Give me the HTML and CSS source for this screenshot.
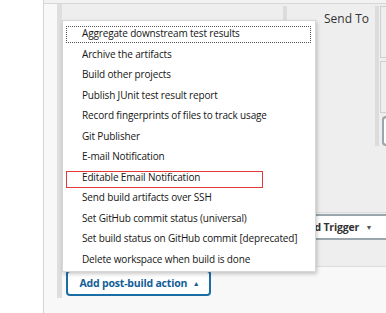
FILE: index.html
```html
<!DOCTYPE html>
<html lang="en">
<head>
  <meta charset="UTF-8">
  <title>Post-build Actions</title>
  <link rel="stylesheet" href="styles.css">
</head>
<body>
  <div class="page">
    <div class="topbar"></div>

    <div class="section">
      <div class="cols">
        <div class="left-col"></div>
        <div class="send-col">
          <div class="send-label">Send To</div>
        </div>
        <div class="extra-col">
          <div class="box"></div>
          <div class="box"></div>
          <div class="mini-button"></div>
        </div>
      </div>

      <div class="trigger-row">
        <button class="trigger-button">Add Trigger <span class="caret">&#9660;</span></button>
      </div>

      <div class="action-row">
        <button class="action-button">Add post-build action <span class="caret">&#9650;</span></button>
      </div>

      <!-- dropdown opened from the post-build button -->
      <ul class="menu">
        <li class="focused">Aggregate downstream test results</li>
        <li>Archive the artifacts</li>
        <li>Build other projects</li>
        <li>Publish JUnit test result report</li>
        <li>Record fingerprints of files to track usage</li>
        <li>Git Publisher</li>
        <li>E-mail Notification</li>
        <li class="marked">Editable Email Notification</li>
        <li>Send build artifacts over SSH</li>
        <li>Set GitHub commit status (universal)</li>
        <li>Set build status on GitHub commit [deprecated]</li>
        <li>Delete workspace when build is done</li>
      </ul>
    </div>
  </div>
</body>
</html>
```

FILE: styles.css
```css
body {
  margin: 0;
  background: #fff;
  font-family: 'Open Sans', 'Noto Sans', sans-serif;
  color: #151515;
  overflow: hidden;
}

.page {
  margin-left: 43px;
  border-left: 1px solid #d4d4d4;
  background: #f8f8f8;
  height: 313px;
  overflow: hidden;
}

.topbar {
  height: 3px;
  background: #f2f2f2;
  border-bottom: 1px solid #d6d6d6;
}

.section {
  position: relative;
  margin-left: 13px;
  border-left: 5px solid #dedede;
  height: 294px;
}

.cols {
  display: flex;
  height: 208px;
  background: #eeeeee;
}

.left-col {
  width: 221px;
}

.send-col {
  margin-top: 2px;
  width: 88px;
  border-left: 4px solid #dcdcdc;
}

.send-label {
  font-size: 12px;
  color: #333;
  padding: 4px 0 0 37px;
}

.extra-col {
  margin-top: 2px;
  height: 140px;
  border-left: 4px solid #dcdcdc;
  padding-left: 1px;
  flex: 1;
  display: flex;
  flex-direction: column;
  gap: 3px;
}

.box {
  height: 52px;
  border: 1px solid #cfcfcf;
  border-right: none;
}

.mini-button {
  margin-left: 2px;
  height: 27px;
  border: 2px solid #9aa6ad;
  border-right: none;
  border-radius: 4px 0 0 4px;
  background: #fff;
}

.trigger-row {
  border-top: 1px solid #dcdcdc;
  border-bottom: 1px solid #dcdcdc;
  background: #eeeeee;
  height: 55px;
  padding-top: 1px;
  box-sizing: border-box;
}

.trigger-button {
  margin-left: 226px;
  height: 26px;
  width: 130px;
  background: #fff;
  border: 2px solid #9aa6ad;
  border-radius: 4px;
  font-family: inherit;
  font-size: 10.5px;
  font-weight: bold;
  letter-spacing: -0.2px;
  color: #333;
  text-align: left;
  padding-left: 11px;
}

.trigger-button .caret {
  font-size: 7px;
  color: #555;
  margin-left: 4px;
  vertical-align: 1px;
}

.action-row {
  padding: 3px 0 0 4px;
  height: 29px;
  box-sizing: border-box;
}

.action-button {
  height: 26px;
  width: 145px;
  background: #fff;
  border: 2px solid #1a6da5;
  border-radius: 4px;
  font-family: inherit;
  font-size: 10.5px;
  font-weight: bold;
  letter-spacing: -0.2px;
  color: #145e96;
  padding: 0 0 0 2px;
}

.action-button .caret {
  font-size: 7px;
  margin-left: 3px;
  vertical-align: 1px;
}

.menu {
  position: absolute;
  top: 16px;
  left: 0;
  width: 252px;
  margin: 0;
  padding: 3px 0 1px;
  list-style: none;
  background: #fff;
  border: 1px solid #d6d6d6;
  box-shadow: 1px 2px 4px rgba(0, 0, 0, 0.22);
  font-size: 10px;
  letter-spacing: -0.15px;
}

.menu li {
  position: relative;
  height: 20.5px;
  line-height: 19px;
  margin: 0 2px 0 3px;
  padding-left: 16px;
  white-space: nowrap;
}

.menu li.focused {
  outline: 1px dotted #555;
  outline-offset: -3px;
  margin-left: 1px;
  padding-left: 18px;
}

.menu li.marked::after {
  content: "";
  position: absolute;
  left: 0;
  top: 3px;
  width: 195px;
  height: 15px;
  border: 1px solid #e53935;
}
```
